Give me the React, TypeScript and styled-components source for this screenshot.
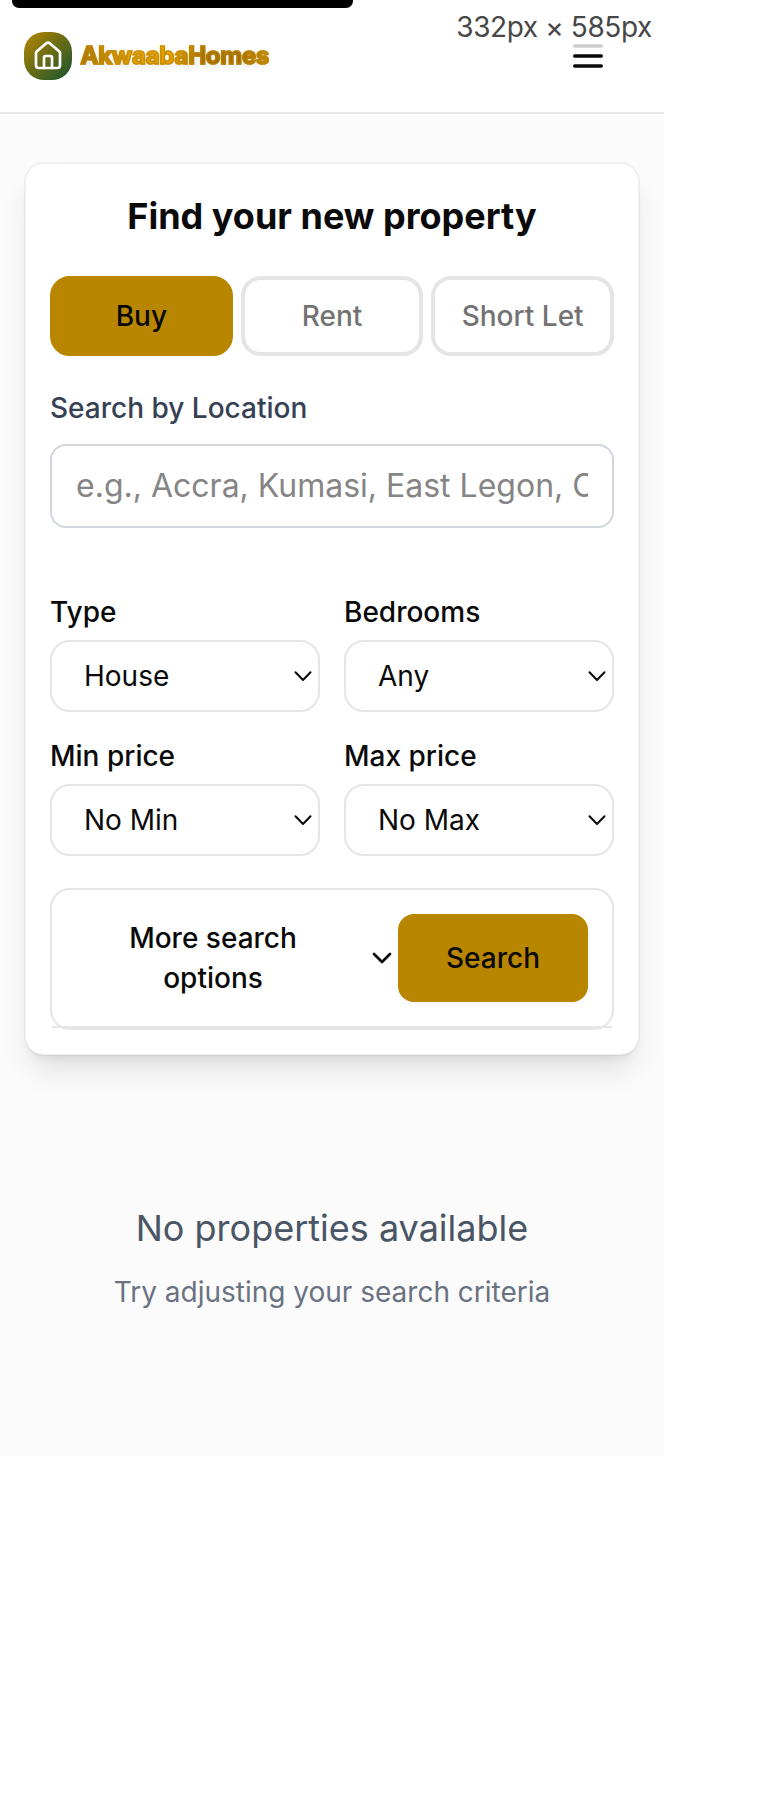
import React from "react";
import styled, { createGlobalStyle } from "styled-components";
import { ChevronDown } from "lucide-react";

const GlobalStyle = createGlobalStyle`
  *, *::before, *::after { box-sizing: border-box; }
  body { margin: 0; background: #fff; color: #0a0a0a; font-family: Inter, "Liberation Sans", sans-serif; font-optical-sizing: none; }
  h1, p { margin: 0; }
  button, input { font: inherit; color: inherit; margin: 0; }
`;

const Screen = styled.div`
  position: relative;
  width: 780px;
  height: 1802px;
  overflow: hidden;
  background: #fff;
`;

const Page = styled.div`
  display: flex;
  flex-direction: column;
  width: 664px;
  height: 1456px;
  overflow: hidden;
  background: #fbfbfb;
`;

const Header = styled.header`
  display: flex;
  align-items: center;
  justify-content: space-between;
  height: 114px;
  flex: none;
  padding: 0 56px 0 24px;
  background: #fff;
  border-bottom: 2px solid #e5e5e5;
`;

const Brand = styled.div`
  display: flex;
  align-items: center;
  gap: 8px;
`;

const Logo = styled.div`
  display: flex;
  align-items: center;
  justify-content: center;
  width: 48px;
  height: 48px;
  border-radius: 20px;
  background: linear-gradient(135deg, #b88600, #14532d);
`;

const BrandName = styled.span`
  width: 189px;
  height: 32px;
  padding-left: 0.5px;
  font-size: 24px;
  font-weight: 700;
  line-height: 32px;
  letter-spacing: -0.24px;
  white-space: nowrap;
  color: transparent;
  background: linear-gradient(90deg, #b07a00 0%, #f0aa00 28%, #f0aa00 48%, #a87200 66%, #a87200 85%, #d09000 100%);
  background-clip: text;
  -webkit-background-clip: text;
  -webkit-text-stroke: 1.6px rgba(190, 134, 4, 0.7);
  text-shadow: 0 4px 8px rgba(0, 0, 0, 0.1);
  overflow: hidden;
`;

const MenuButton = styled.button`
  display: flex;
  padding: 0;
  border: 0;
  background: none;
`;

const Card = styled.section`
  margin: 48px 24px 0;
  padding: 24px;
  height: 894px;
  flex: none;
  background: #fff;
  background-clip: padding-box;
  border: 2px solid rgba(0, 0, 0, 0.045);
  border-radius: 20px;
  box-shadow: 0 20px 30px -6px rgba(0, 0, 0, 0.1), 0 8px 12px -8px rgba(0, 0, 0, 0.1);
`;

const Title = styled.h1`
  height: 56px;
  font-size: 36px;
  line-height: 56px;
  font-weight: 700;
  text-align: center;
  white-space: nowrap;
`;

const Tabs = styled.div`
  display: grid;
  grid-template-columns: repeat(3, 1fr);
  gap: 8px;
  margin-top: 32px;
`;

const Tab = styled.button<{ $active?: boolean }>`
  height: 80px;
  padding: 0;
  font-size: 28px;
  font-weight: 500;
  border-radius: 20px;
  border: 4px solid ${(p) => (p.$active ? "#b88600" : "#e5e5e5")};
  background: ${(p) => (p.$active ? "#b88600" : "#fff")};
  color: ${(p) => (p.$active ? "#0a0a0a" : "#737373")};
`;

const Label = styled.label<{ $muted?: boolean }>`
  display: block;
  height: 40px;
  font-size: 28px;
  line-height: 40px;
  font-weight: 500;
  color: ${(p) => (p.$muted ? "#364153" : "#0a0a0a")};
`;

const LocationField = styled.div`
  margin-top: 32px;
`;

const LocationInput = styled.input`
  display: block;
  width: 100%;
  height: 84px;
  margin-top: 16px;
  padding: 0 24px 2px;
  font-size: 32px;
  background: #fff;
  border: 2px solid #d1d5dc;
  border-radius: 16px;
  outline: none;
  &::placeholder { color: #858585; opacity: 1; }
`;

const Filters = styled.div`
  display: grid;
  grid-template-columns: 1fr 1fr;
  gap: 24px;
  margin-top: 64px;
`;

const Select = styled.button`
  display: flex;
  align-items: center;
  justify-content: space-between;
  width: 100%;
  height: 72px;
  margin-top: 8px;
  padding: 0 3px 0 32px;
  font-size: 28px;
  background: #fff;
  border: 2px solid #e5e5e5;
  border-radius: 20px;
`;

const Options = styled.div`
  margin-top: 32px;
  border: 2px solid #e5e5e5;
  border-radius: 20px;
`;

const OptionsRow = styled.div`
  display: flex;
  align-items: center;
  padding: 24px;
  border-bottom: 2px solid #e5e5e5;
`;

const MoreButton = styled.button`
  display: flex;
  align-items: center;
  justify-content: space-between;
  width: 322px;
  padding: 0;
  font-size: 28px;
  line-height: 40px;
  font-weight: 500;
  border: 0;
  background: none;
`;

const MoreText = styled.span`
  width: 274px;
  padding: 0 40px;
  text-align: center;
`;

const SearchButton = styled.button`
  width: 190px;
  height: 88px;
  padding: 0;
  font-size: 28px;
  font-weight: 500;
  border: 0;
  border-radius: 16px;
  background: #b88600;
  box-shadow: 0 2px 4px rgba(0, 0, 0, 0.05);
`;

const Empty = styled.section`
  margin-top: 144px;
  text-align: center;
`;

const EmptyTitle = styled.p`
  font-size: 36px;
  line-height: 56px;
  color: #4a5565;
`;

const EmptyText = styled.p`
  margin-top: 16px;
  font-size: 28px;
  line-height: 40px;
  color: #6a7282;
`;

const TopBar = styled.div`
  position: absolute;
  left: 12px;
  top: 0;
  width: 341px;
  height: 8px;
  border-radius: 0 0 7px 7px;
  background: #000;
`;

const SizeBadge = styled.div`
  position: absolute;
  top: 0;
  right: 116px;
  height: 51px;
  padding: 6px 12px 0;
  font-size: 28px;
  line-height: 42px;
  letter-spacing: -0.4px;
  white-space: nowrap;
  color: #474747;
  background: rgba(255, 255, 255, 0.8);
`;

const filters = [
  { label: "Type", value: "House" },
  { label: "Bedrooms", value: "Any" },
  { label: "Min price", value: "No Min" },
  { label: "Max price", value: "No Max" },
];

const HomeMark = () => (
  <svg width="32" height="32" viewBox="0 0 24 24" fill="none" stroke="#fff" strokeWidth="2" strokeLinecap="round" strokeLinejoin="round">
    <path d="M15 21v-8a1 1 0 0 0-1-1h-4a1 1 0 0 0-1 1v8" />
    <path d="M3 10a2 2 0 0 1 .709-1.528l7-5.999a2 2 0 0 1 2.582 0l7 5.999A2 2 0 0 1 21 10v9a2 2 0 0 1-2 2H5a2 2 0 0 1-2-2z" />
  </svg>
);

const MenuLines = () => (
  <svg width="40" height="40" viewBox="0 0 24 24" fill="none" stroke="#0a0a0a" strokeWidth="2" strokeLinecap="round">
    <path d="M4 6h16M4 12h16M4 18h16" />
  </svg>
);

const SelectArrow = () => (
  <svg width="24" height="24" viewBox="0 0 24 24" fill="none" stroke="#0a0a0a" strokeWidth="2" strokeLinecap="round" strokeLinejoin="round">
    <path d="M4.5 8.2 12 16l7.5-7.8" />
  </svg>
);

export default function App() {
  return (
    <Screen>
      <GlobalStyle />
      <Page>
        <Header>
          <Brand>
            <Logo><HomeMark /></Logo>
            <BrandName>AkwaabaHomes</BrandName>
          </Brand>
          <MenuButton aria-label="Menu"><MenuLines /></MenuButton>
        </Header>
        <Card>
          <Title>Find your new property</Title>
          <Tabs>
            <Tab $active>Buy</Tab>
            <Tab>Rent</Tab>
            <Tab>Short Let</Tab>
          </Tabs>
          <LocationField>
            <Label $muted htmlFor="location">Search by Location</Label>
            <LocationInput id="location" placeholder="e.g., Accra, Kumasi, East Legon, Cantonments" />
          </LocationField>
          <Filters>
            {filters.map((f) => (
              <div key={f.label}>
                <Label>{f.label}</Label>
                <Select>{f.value}<SelectArrow /></Select>
              </div>
            ))}
          </Filters>
          <Options>
            <OptionsRow>
              <MoreButton>
                <MoreText>More search options</MoreText>
                <ChevronDown size={32} />
              </MoreButton>
              <SearchButton>Search</SearchButton>
            </OptionsRow>
          </Options>
        </Card>
        <Empty>
          <EmptyTitle>No properties available</EmptyTitle>
          <EmptyText>Try adjusting your search criteria</EmptyText>
        </Empty>
      </Page>
      <TopBar />
      <SizeBadge>332px × 585px</SizeBadge>
    </Screen>
  );
}
